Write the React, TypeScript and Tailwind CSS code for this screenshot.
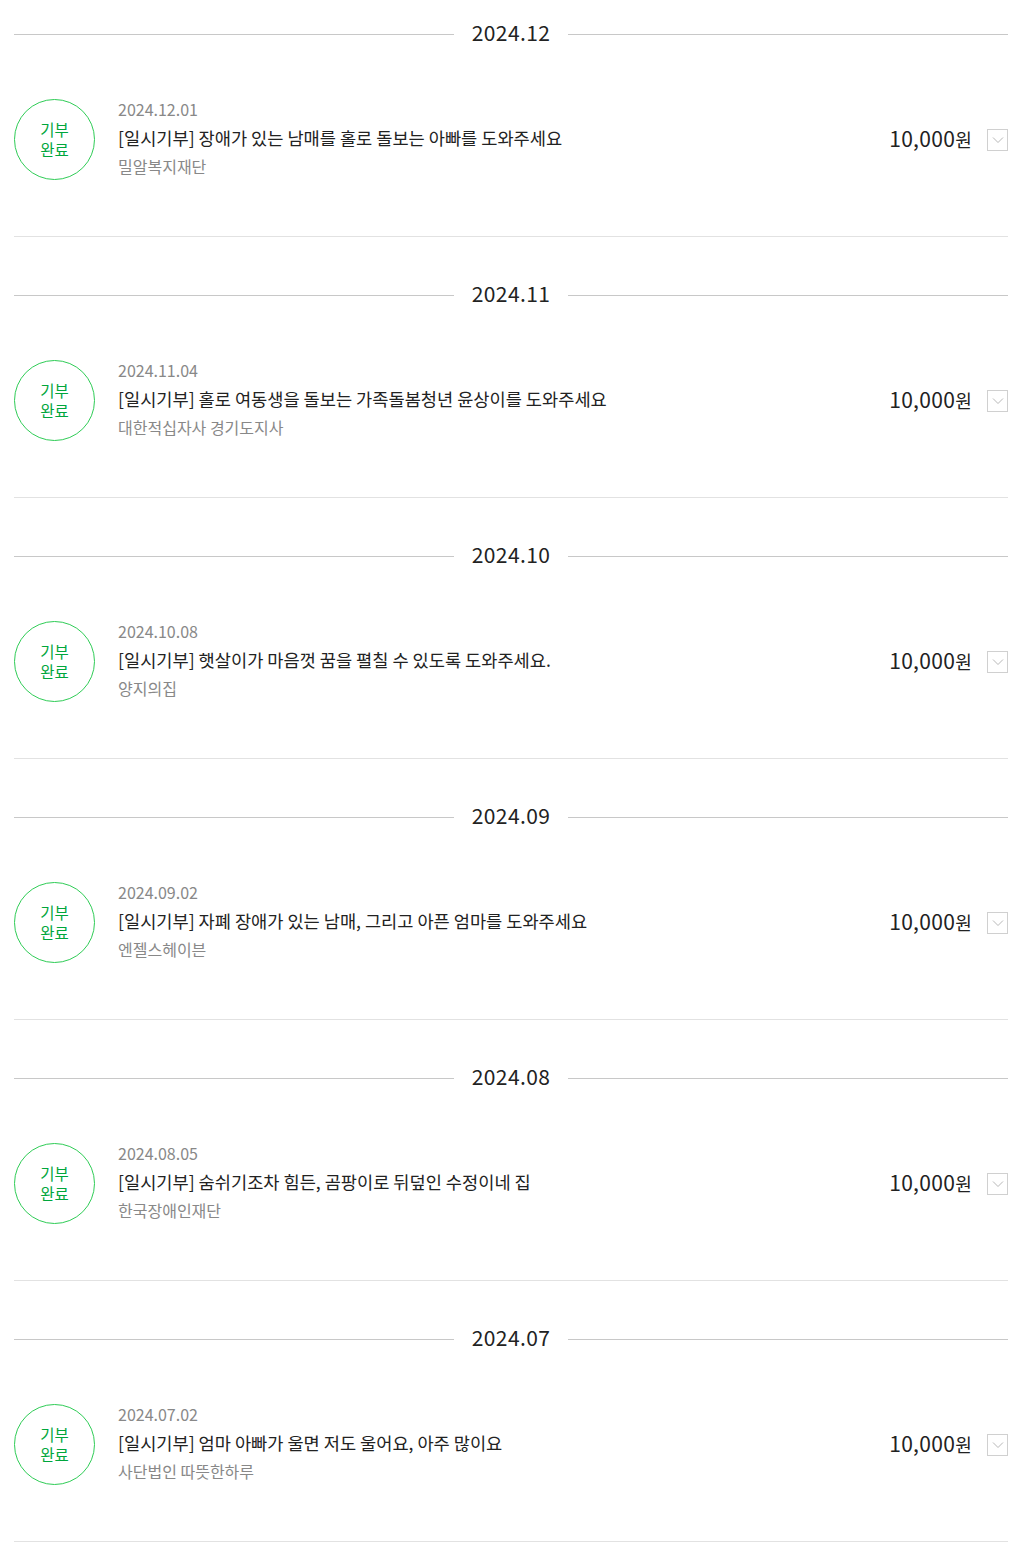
import React from "react";

const donations = [
  {
    month: "2024.12",
    date: "2024.12.01",
    title: "[일시기부] 장애가 있는 남매를 홀로 돌보는 아빠를 도와주세요",
    org: "밀알복지재단",
  },
  {
    month: "2024.11",
    date: "2024.11.04",
    title: "[일시기부] 홀로 여동생을 돌보는 가족돌봄청년 윤상이를 도와주세요",
    org: "대한적십자사 경기도지사",
  },
  {
    month: "2024.10",
    date: "2024.10.08",
    title: "[일시기부] 햇살이가 마음껏 꿈을 펼칠 수 있도록 도와주세요.",
    org: "양지의집",
  },
  {
    month: "2024.09",
    date: "2024.09.02",
    title: "[일시기부] 자폐 장애가 있는 남매, 그리고 아픈 엄마를 도와주세요",
    org: "엔젤스헤이븐",
  },
  {
    month: "2024.08",
    date: "2024.08.05",
    title: "[일시기부] 숨쉬기조차 힘든, 곰팡이로 뒤덮인 수정이네 집",
    org: "한국장애인재단",
  },
  {
    month: "2024.07",
    date: "2024.07.02",
    title: "[일시기부] 엄마 아빠가 울면 저도 울어요, 아주 많이요",
    org: "사단법인 따뜻한하루",
  },
];

const App = () => {
  return (
    <div className="min-h-screen bg-white pl-[14px] pr-[17px] font-['Noto_Sans_CJK_KR','Noto_Sans',sans-serif] text-[#222]">
      {donations.map((d, i) => (
        <section key={d.date} className={i === 0 ? "" : "pt-6"}>
          <div className="flex h-[68px] items-center">
            <div className="h-px flex-1 bg-[#c8c8c8]" />
            <h2 className="-mt-[3px] px-[18px] text-[21px] leading-none tracking-[0.4px] text-[#222]">
              {d.month}
            </h2>
            <div className="h-px flex-1 bg-[#c8c8c8]" />
          </div>

          <div className="flex items-center border-b border-[#e2e2e2] pb-[56px] pt-[31px]">
            <div className="flex h-[81px] w-[81px] shrink-0 flex-col items-center justify-center rounded-full border border-[#2fcc56] pb-[2px] text-[15.5px] leading-[20px] text-[#00a63c]">
              <span>기부</span>
              <span>완료</span>
            </div>

            <div className="ml-[23px] -mt-[4px] flex flex-1 flex-col">
              <span className="text-[16px] leading-[20px] text-[#888]">{d.date}</span>
              <span className="mt-[9px] text-[17.6px] leading-[20px] text-[#222]">
                {d.title}
              </span>
              <span className="mt-[8px] text-[16px] leading-[20px] text-[#888]">{d.org}</span>
            </div>

            <div className="-mt-[3px] flex items-center">
              <span className="text-[21px] leading-none tracking-[0.3px] text-[#222]">
                10,000<span className="text-[18px]">원</span>
              </span>
              <button className="ml-[15px] mt-[3px] flex h-[22px] w-[21px] items-center justify-center border border-[#d0d0d0] bg-white">
                <svg width="12" height="8" viewBox="0 0 12 8" fill="none">
                  <path d="M1 1.5L6 6.5L11 1.5" stroke="#b8b8b8" strokeWidth="1" />
                </svg>
              </button>
            </div>
          </div>
        </section>
      ))}
    </div>
  );
};

export default App;
